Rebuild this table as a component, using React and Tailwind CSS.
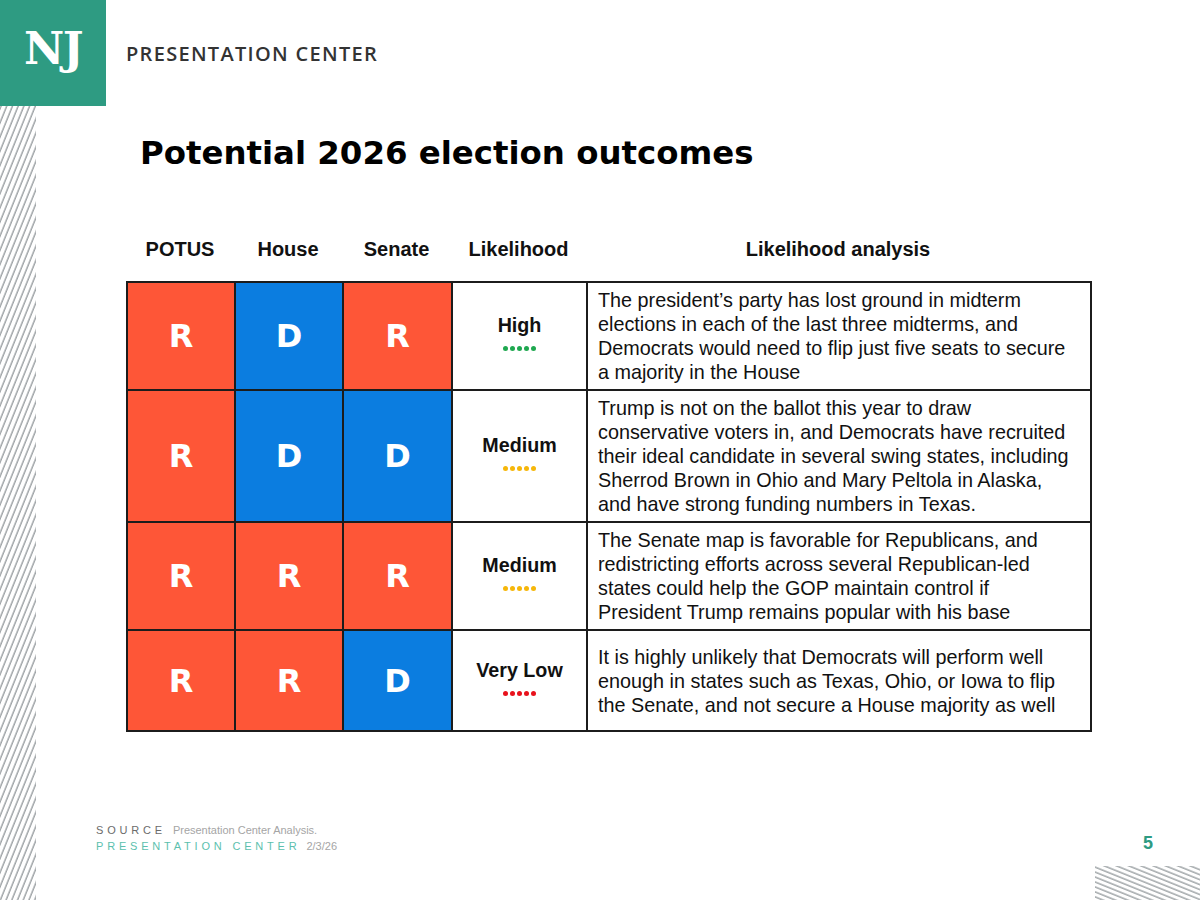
const ROWS = [
  {
    cells: ["R", "D", "R"],
    level: "High",
    dot: "bg-[#1fa850]",
    h: "h-[108px]",
    lines: [
      "The president’s party has lost ground in midterm",
      "elections in each of the last three midterms, and",
      "Democrats would need to flip just five seats to secure",
      "a majority in the House",
    ],
  },
  {
    cells: ["R", "D", "D"],
    level: "Medium",
    dot: "bg-[#f6b70a]",
    h: "h-[132px]",
    lines: [
      "Trump is not on the ballot this year to draw",
      "conservative voters in, and Democrats have recruited",
      "their ideal candidate in several swing states, including",
      "Sherrod Brown in Ohio and Mary Peltola in Alaska,",
      "and have strong funding numbers in Texas.",
    ],
  },
  {
    cells: ["R", "R", "R"],
    level: "Medium",
    dot: "bg-[#f6b70a]",
    h: "h-[108px]",
    lines: [
      "The Senate map is favorable for Republicans, and",
      "redistricting efforts across several Republican-led",
      "states could help the GOP maintain control if",
      "President Trump remains popular with his base",
    ],
  },
  {
    cells: ["R", "R", "D"],
    level: "Very Low",
    dot: "bg-[#e8121c]",
    h: "h-[101px]",
    lines: [
      "It is highly unlikely that Democrats will perform well",
      "enough in states such as Texas, Ohio, or Iowa to flip",
      "the Senate, and not secure a House majority as well",
    ],
  },
];

const HEADERS = [
  ["POTUS", "w-[108px]"],
  ["House", "w-[108px]"],
  ["Senate", "w-[109px]"],
  ["Likelihood", "w-[135px]"],
  ["Likelihood analysis", "w-[504px]"],
];

const CELL_W = ["w-[108px]", "w-[108px]", "w-[109px]"];

function Stripes({ id, angle, spacing, className, vertical }) {
  return (
    <svg className={className} xmlns="http://www.w3.org/2000/svg">
      <defs>
        <pattern id={id} width={vertical ? spacing : 10} height={vertical ? 10 : spacing}
          patternUnits="userSpaceOnUse" patternTransform={`rotate(${angle})`}>
          {vertical
            ? <line x1="1" y1="0" x2="1" y2="10" stroke="#80868a" strokeWidth="1.1" />
            : <line x1="0" y1="1" x2="10" y2="1" stroke="#80868a" strokeWidth="1.1" />}
        </pattern>
      </defs>
      <rect width="100%" height="100%" fill={`url(#${id})`} />
    </svg>
  );
}

export default function App() {
  return (
    <div className="w-[1200px] h-[900px] bg-white flex flex-col overflow-hidden font-['Liberation_Sans',Arial,sans-serif] text-[#111]">
      {/* top bar */}
      <div className="flex items-center h-[106px] shrink-0">
        <div className="w-[106px] h-[106px] bg-[#2e9b82] flex items-center justify-center pb-[8px]">
          <span className="font-['DejaVu_Serif',serif] font-bold text-white text-[44px] leading-none tracking-[-1.5px]">NJ</span>
        </div>
        <span className="ml-[20px] mt-[2px] font-['Open_Sans',sans-serif] font-semibold text-[20px] tracking-[1.3px] text-[#333] leading-none">
          PRESENTATION CENTER
        </span>
      </div>

      <div className="flex flex-1 min-h-0">
        <Stripes id="leftStripes" angle={22} spacing={5.3} vertical className="w-[36px] h-full shrink-0" />

        <div className="flex-1 flex flex-col">
          <h1 className="mt-[28px] ml-[104px] font-['DejaVu_Sans',sans-serif] font-bold text-[32.4px] leading-[38px] text-black">
            Potential 2026 election outcomes
          </h1>

          <div className="ml-[90px] mt-[65px] flex">
            {HEADERS.map(([label, w]) => (
              <div key={label} className={`${w} text-center font-bold text-[20px] leading-[24px]`}>{label}</div>
            ))}
          </div>

          <table className="ml-[90px] mt-[20px] w-[964px] table-fixed border-collapse border-2 border-[#1c1c1c]">
            <tbody>
              {ROWS.map((row, i) => (
                <tr key={i} className={row.h}>
                  {row.cells.map((c, j) => (
                    <td key={j} className={`${CELL_W[j]} border-2 border-[#1c1c1c] text-center text-white font-['DejaVu_Sans',sans-serif] font-bold text-[32px] ${c === "R" ? "bg-[#fe5637]" : "bg-[#0b7de0]"}`}>
                      {c}
                    </td>
                  ))}
                  <td className="w-[135px] border-2 border-[#1c1c1c] align-middle">
                    <div className="flex flex-col items-center">
                      <span className="font-bold text-[19.7px] leading-[24px]">{row.level}</span>
                      <div className="flex gap-[2.2px] mt-[9px] mb-[8px]">
                        {[0, 1, 2, 3, 4].map(k => (
                          <span key={k} className={`w-[5px] h-[5px] rounded-full ${row.dot}`} />
                        ))}
                      </div>
                    </div>
                  </td>
                  <td className="w-[504px] border-2 border-[#1c1c1c] px-[10px] align-middle">
                    <div className="text-[19.8px] leading-[24px] whitespace-nowrap">
                      {row.lines.map((l, k) => <div key={k}>{l}</div>)}
                    </div>
                  </td>
                </tr>
              ))}
            </tbody>
          </table>

          <div className="mt-auto flex items-end justify-between pl-[60px] pr-[47px]">
            <div className="text-[11px] leading-[16px]">
              <div className="flex">
                <span className="tracking-[3.8px] text-[#6b6b6b]">SOURCE</span>
                <span className="ml-[7px] text-[#a5a5a5]">Presentation Center Analysis.</span>
              </div>
              <div className="flex">
                <span className="tracking-[3.8px] text-[#5cbfae]">PRESENTATION CENTER</span>
                <span className="ml-[6px] text-[#a5a5a5]">2/3/26</span>
              </div>
            </div>
            <span className="font-bold text-[18px] leading-[22px] text-[#2e9b82]">5</span>
          </div>

          <div className="flex justify-end mt-[12px]">
            <Stripes id="cornerStripes" angle={22} spacing={4.6} className="w-[105px] h-[34px]" />
          </div>
        </div>
      </div>
    </div>
  );
}
